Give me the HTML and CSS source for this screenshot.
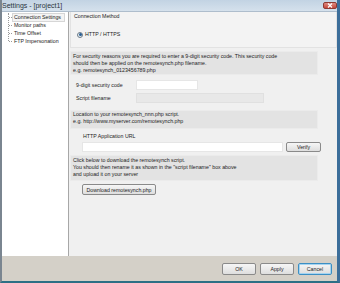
FILE: index.html
```html
<!DOCTYPE html>
<html lang="en">
  <head>
    <meta charset="UTF-8" />
    <title>Settings - [project1]</title>
    <link rel="stylesheet" href="styles.css">
  </head>
  <body>
    <div class="window">
      <div class="titlebar">
        <span class="title">Settings - [project1]</span>
        <span class="close-btn">
          <svg width="6" height="5" viewBox="0 0 6 5">
            <path d="M1 0.5 L5 4.5 M5 0.5 L1 4.5" stroke="#fff" stroke-width="1.2" />
          </svg>
        </span>
      </div>

      <div class="main">
        <div class="tree">
          <ul class="tree-list">
            <li class="tree-item selected"><span>Connection Settings</span></li>
            <li class="tree-item"><span>Monitor paths</span></li>
            <li class="tree-item"><span>Time Offset</span></li>
            <li class="tree-item"><span>FTP Impersonation</span></li>
          </ul>
        </div>

        <div class="content">
          <div class="group">
            <div class="group-title">Connection Method</div>
            <label class="radio-row">
              <span class="radio"><span class="radio-dot"></span></span>
              HTTP / HTTPS
            </label>
          </div>

          <div class="info-box box-1">
            For security reasons you are required to enter a 9-digit security code. This security code<br />
            should then be applied on the remotesynch.php filename.<br />
            e.g. remotesynch_0123456789.php
          </div>

          <div class="form-row row-code">
            <span class="form-label">9-digit security code</span>
            <span class="input code-input"></span>
          </div>
          <div class="form-row row-file">
            <span class="form-label">Script filename</span>
            <span class="input disabled file-input"></span>
          </div>

          <div class="info-box box-2">
            Location to your remotesynch_nnn.php script.<br />
            e.g. http://www.myserver.com/remotesynch.php
          </div>

          <div class="url-label">HTTP Application URL</div>
          <div class="url-row">
            <span class="input url-input"></span>
            <button class="btn verify-btn">Verify</button>
          </div>

          <div class="info-box box-3">
            Click below to download the remotesynch script.<br />
            You should then rename it as shown in the "script filename" box above<br />
            and upload it on your server
          </div>

          <button class="btn download-btn">Download remotesynch.php</button>
        </div>
      </div>

      <div class="footer">
        <button class="btn footer-btn">OK</button>
        <button class="btn footer-btn">Apply</button>
        <button class="btn footer-btn default">Cancel</button>
      </div>
    </div>
  </body>
</html>
```

FILE: styles.css
```css
* {
  margin: 0;
  padding: 0;
  box-sizing: border-box;
  font-family: "Liberation Sans", Arial, sans-serif;
}
body {
  width: 340px;
  height: 283px;
  background: #f0f0f0;
  overflow: hidden;
}
.window {
  width: 340px;
  height: 283px;
  display: flex;
  flex-direction: column;
  border-left: 2px solid #7a8590;
  border-right: 3px solid #3c6e9a;
  border-bottom: 2px solid #2d6f85;
  font-size: 5.25px;
  color: #1c1c1c;
}
.titlebar {
  height: 12px;
  display: flex;
  align-items: center;
  justify-content: space-between;
  padding: 0 0 1px 0;
  background: linear-gradient(#c2d3e3, #d5e1ec);
  border-bottom: 1px solid #aebdcc;
}
.title {
  font-size: 7px;
  color: #2a3440;
}
.close-btn {
  width: 14px;
  height: 7px;
  display: flex;
  align-items: center;
  justify-content: center;
  background: linear-gradient(#e08a80, #c4483c);
  border: 1px solid #8e3a33;
  border-radius: 2px;
}
.main {
  flex: 1;
  display: flex;
  min-height: 0;
}
.tree {
  width: 67px;
  background: #fff;
  border-right: 1px solid #a7a7a7;
  padding-top: 1px;
}
.tree-list {
  list-style: none;
  margin-left: 6px;
  border-left: 1px dotted #9a9a9a;
  height: 28px;
}
.tree-item {
  display: flex;
  align-items: center;
  height: 8px;
  white-space: nowrap;
}
.tree-item::before {
  content: "";
  width: 3px;
  border-top: 1px dotted #9a9a9a;
}
.tree-item span {
  padding: 0 1px;
  line-height: 7px;
  border: 1px solid transparent;
}
.tree-item.selected span {
  border-color: #d6d6d6;
  background: #f4f4f4;
  width: 53px;
}
.content {
  flex: 1;
  padding-left: 1px;
  background: #f0f0f0;
}
.group {
  height: 36px;
  width: 267px;
  border: 1px solid #e2e2e2;
  border-top: none;
  background: #f3f3f3;
  padding: 1px 0 0 3px;
}
.group-title {
  line-height: 7px;
}
.radio-row {
  display: flex;
  align-items: center;
  margin-top: 11px;
  margin-left: 3px;
  gap: 2px;
  line-height: 7px;
}
.radio {
  width: 6px;
  height: 6px;
  border-radius: 50%;
  border: 1px solid #6e7c88;
  background: #e8eef3;
  display: flex;
  align-items: center;
  justify-content: center;
}
.radio-dot {
  width: 3px;
  height: 3px;
  border-radius: 50%;
  background: #2a5f93;
}
.info-box {
  width: 248px;
  background: #e3e3e3;
  border: 1px solid #ebebeb;
  line-height: 7px;
  padding: 1px 2px;
  white-space: nowrap;
}
.box-1 {
  margin-top: 3px;
  height: 24px;
}
.form-row {
  display: flex;
  align-items: center;
  padding-left: 6px;
}
.form-label {
  width: 60px;
}
.row-code {
  margin-top: 5px;
}
.row-file {
  margin-top: 3px;
}
.input {
  display: block;
  height: 10px;
  background: #fff;
  border: 1px solid #e6e6e6;
}
.code-input {
  width: 62px;
}
.input.disabled {
  background: #e8e8e8;
  border-color: #e0e0e0;
}
.file-input {
  width: 128px;
}
.box-2 {
  margin-top: 7px;
  height: 19px;
  padding-top: 0;
}
.url-label {
  margin: 4px 0 0 13px;
  line-height: 7px;
}
.url-row {
  display: flex;
  align-items: center;
  gap: 3px;
  margin: 2px 0 0 12px;
}
.url-input {
  width: 201px;
}
.btn {
  font-size: 5.25px;
  color: #1c1c1c;
  background: linear-gradient(#f6f6f6, #dedede);
  border: 1px solid #8a8a8a;
  border-radius: 2px;
  line-height: 8px;
}
.verify-btn {
  width: 35px;
  height: 10px;
}
.box-3 {
  margin-top: 3px;
  height: 26px;
  padding-top: 1px;
}
.download-btn {
  display: block;
  width: 74px;
  height: 11px;
  margin: 3px 0 0 12px;
}
.footer {
  height: 25px;
  background: #d4d0c8;
  display: flex;
  justify-content: flex-end;
  align-items: flex-start;
  gap: 4px;
  padding: 7px 5px 0 0;
}
.footer-btn {
  width: 34px;
  height: 12px;
}
.footer-btn.default {
  border: 1px solid #3c8fc4;
  box-shadow: inset 0 0 0 1px #a6d4f0;
}
```
